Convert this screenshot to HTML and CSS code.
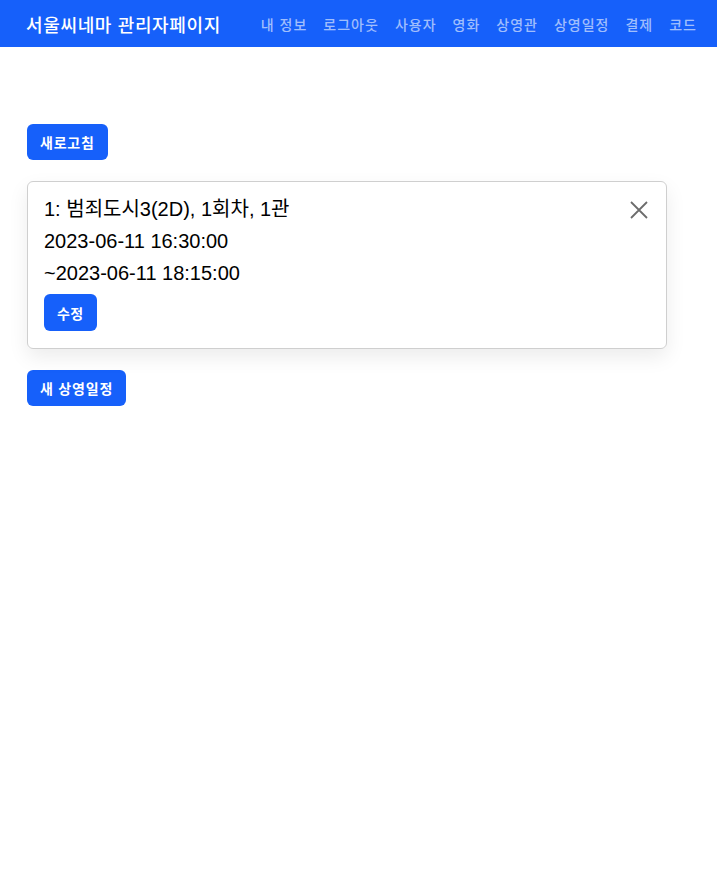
FILE: index.html
```html
<!DOCTYPE html>
<html lang="ko">
<head>
<meta charset="utf-8">
<title>서울씨네마 관리자페이지</title>
<link rel="stylesheet" href="styles.css">
</head>
<body>
<nav class="navbar">
  <span class="brand">서울씨네마 관리자페이지</span>
  <ul class="nav">
    <li>내 정보</li>
    <li>로그아웃</li>
    <li>사용자</li>
    <li>영화</li>
    <li>상영관</li>
    <li>상영일정</li>
    <li>결제</li>
    <li>코드</li>
  </ul>
</nav>
<main class="main">
  <button class="btn">새로고침</button>
  <div class="card">
    <button class="close" aria-label="close">
      <svg width="18" height="18" viewBox="0 0 18 18"><path d="M1 1L17 17M17 1L1 17" stroke="#6c6c6c" stroke-width="1.8" fill="none"/></svg>
    </button>
    <div class="line">1: 범죄도시3(2D), 1회차, 1관</div>
    <div class="line">2023-06-11 16:30:00</div>
    <div class="line">~2023-06-11 18:15:00</div>
    <button class="btn edit">수정</button>
  </div>
  <button class="btn">새 상영일정</button>
</main>
</body>
</html>
```
FILE: styles.css
```css
* { box-sizing: border-box; }
body {
  margin: 0;
  font-family: "Liberation Sans", "Noto Sans CJK KR", sans-serif;
  color: #000;
  background: #fff;
}
.navbar {
  height: 47px;
  background: #1660fa;
  display: flex;
  align-items: center;
  justify-content: space-between;
  padding: 0 20px 0 26px;
}
.brand {
  color: #fff;
  font-size: 18px;
  font-weight: 500;
  letter-spacing: 0.65px;
}
.nav {
  list-style: none;
  margin: 0;
  padding: 0;
  display: flex;
  gap: 16px;
}
.nav li {
  color: rgba(255, 255, 255, 0.6);
  font-size: 14px;
  font-weight: 500;
  letter-spacing: 1px;
}
.main {
  padding: 77px 27px 0;
  display: flex;
  flex-direction: column;
  align-items: flex-start;
}
.btn {
  background: #1660fa;
  color: #fff;
  border: none;
  border-radius: 6px;
  font-family: inherit;
  font-size: 14px;
  font-weight: 700;
  letter-spacing: 0.8px;
  height: 36px;
  padding: 0 13px;
  cursor: pointer;
}
.card {
  position: relative;
  width: 640px;
  margin: 21px 0 21px;
  border: 1px solid #cfcfcf;
  border-radius: 6px;
  padding: 11px 16px 17px;
  box-shadow: 0 8px 20px rgba(0, 0, 0, 0.08);
  display: flex;
  flex-direction: column;
  align-items: flex-start;
}
.line {
  font-size: 20px;
  line-height: 32px;
}
.edit {
  margin-top: 5px;
  height: 37px;
  letter-spacing: 0.4px;
}
.close {
  position: absolute;
  top: 19px;
  right: 18px;
  background: none;
  border: none;
  padding: 0;
  width: 18px;
  height: 18px;
  cursor: pointer;
}
```
